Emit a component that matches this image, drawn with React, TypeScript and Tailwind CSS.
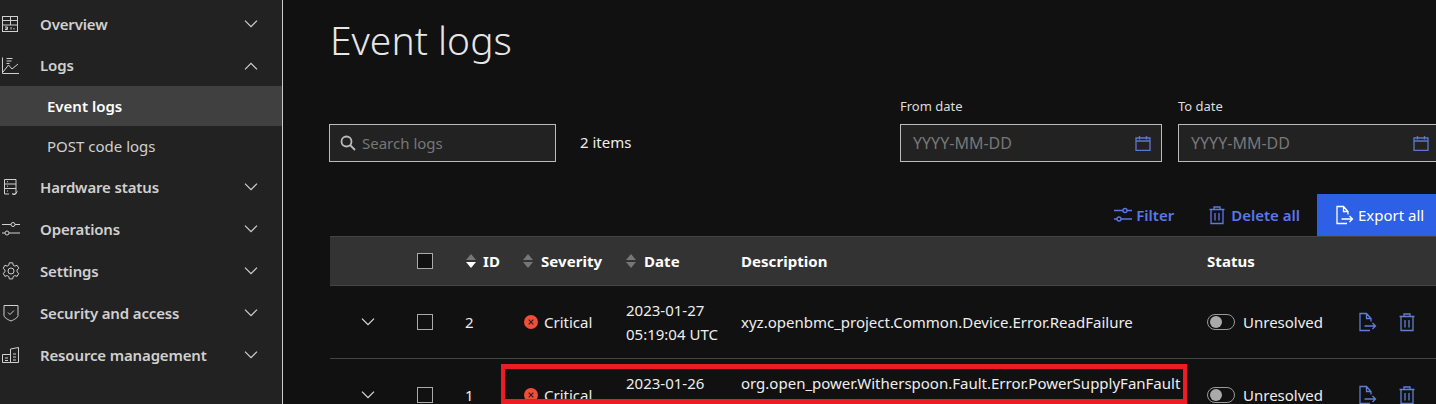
import type { ReactNode } from 'react';

const rowGrid = 'grid grid-cols-[87px_48px_57px_103px_116px_466px_150px_1fr] items-center';

function Svg({ children, className, strokeWidth = 1 }: { children: ReactNode; className?: string; strokeWidth?: number }) {
  return (
    <svg viewBox="0 0 20 20" fill="none" stroke="currentColor" strokeWidth={strokeWidth} className={className}>
      {children}
    </svg>
  );
}

const Chevron = ({ up, className }: { up?: boolean; className?: string }) => (
  <svg viewBox="0 0 14 8" fill="none" stroke="currentColor" strokeWidth="1.200" className={`w-[14px] h-[8px] ${className ?? ''}`}>
    <path d={up ? 'M1 7.300l6-6 6 6' : 'M1 .7l6 6 6-6'} />
  </svg>
);

const DashboardIcon = () => (
  <Svg className="w-[20px] h-[20px]">
    <rect x="1.500" y="2.500" width="15" height="15" />
    <path d="M1.500 6.500h15M1.500 11h15M9.500 2.500v8.500M4 13h2.500v1.200h-2M6.500 14.200v1.300h-2.500M10 13v2.500M13 14v1.500" />
  </Svg>
);
const ChartIcon = () => (
  <Svg className="w-[20px] h-[20px]">
    <path d="M1.500 1.500v16h16.500M2 16l5.500-7 3.500 4 6-5M5.500 2.500h6M5.500 5h5M5.500 7.500h3" />
  </Svg>
);
const HardwareIcon = () => (
  <Svg className="w-[20px] h-[20px]">
    <path d="M3.500 2.500h11.500v14.500h-4M8 17h-4.500v-14.500M3.500 7h11.500M3.500 11.500h11.500M6 4.700h1M6 9.200h1M6 14h1M11.500 16.500l1.500 1.500 3.500-3.500" />
  </Svg>
);
const SlidersIcon = ({ className, strokeWidth }: { className?: string; strokeWidth?: number }) => (
  <Svg className={className} strokeWidth={strokeWidth}>
    <circle cx="12" cy="5.500" r="2" />
    <circle cx="6" cy="14" r="2" />
    <path d="M1 5.500h9M14 5.500h5M1 14h3M8 14h11" />
  </Svg>
);
const GearIcon = () => (
  <Svg className="w-[20px] h-[20px]">
    <circle cx="10" cy="10" r="3" />
    <path d="M8.300 1.800h3.400l.5 2.400 1.600.9 2.300-.8 1.700 3-1.800 1.600v1.900l1.800 1.600-1.700 3-2.300-.8-1.600.9-.5 2.400H8.300l-.5-2.400-1.600-.9-2.300.8-1.700-3 1.800-1.600V9.100L2.200 7.300l1.700-3 2.300.8 1.600-.9z" />
  </Svg>
);
const ShieldIcon = () => (
  <Svg className="w-[20px] h-[20px]">
    <path d="M3 2.500h14v10c0 2-3.500 4-7 5.500-3.500-1.500-7-3.500-7-5.500zM7 9.500l2 2 4-4" />
  </Svg>
);
const ResourceIcon = () => (
  <Svg className="w-[20px] h-[20px]">
    <path d="M1.500 9.500h8v8h-8zM9.500 4l8-1.500v15h-8zM4 13h3M4 15.500h3M12 9h3M12 12h3M12 15h3" />
  </Svg>
);
const CalendarIcon = () => (
  <svg viewBox="0 0 16 16" fill="none" stroke="#5b78cc" strokeWidth="1.300" className="w-[16px] h-[16px]">
    <path d="M1 3h14v12.300h-14zM1 6h14M4.500 1v3.500M11.500 1v3.500" />
  </svg>
);
const TrashIcon = ({ className }: { className?: string }) => (
  <Svg className={className} strokeWidth={1.300}>
    <path d="M2.500 4.500h15M7 4.500v-2.500h6v2.500M4 4.500v14h12v-14M8 8v7.500M12 8v7.500" />
  </Svg>
);
const ExportIcon = ({ className }: { className?: string }) => (
  <Svg className={className} strokeWidth={1.300}>
    <path d="M13 18.500h-10v-17h6.500l4.500 5v3M9.500 1.500v5h4.500M7.500 14h11M15.500 11l3 3-3 3" />
  </Svg>
);

function NavItem({ icon, label, open, height = 'h-[42px]' }: { icon: ReactNode; label: string; open?: boolean; height?: string }) {
  return (
    <div className={`${height} flex items-center text-[#d0d0d0] font-semibold tracking-[-0.15px]`}>
      <span className="w-[40px] pl-px shrink-0 flex">{icon}</span>
      <span className="flex-1">{label}</span>
      <Chevron up={open} className="mr-[24px]" />
    </div>
  );
}

function DateField({ label }: { label: string }) {
  return (
    <div className="w-[262px] shrink-0">
      <div className="text-[13px] text-[#ddd] h-[28px] leading-[16px] pt-[2px]">{label}</div>
      <div className="h-[38px] bg-[#222] border border-[#bbb] flex items-center justify-between pl-[12px] pr-[10px] text-[#777]">
        <span className="text-[16px]">YYYY-MM-DD</span>
        <CalendarIcon />
      </div>
    </div>
  );
}

function SortIcon({ active }: { active?: boolean }) {
  return (
    <svg viewBox="0 0 12 16" className="w-[12px] h-[16px]">
      <path d="M6 1l5 6H1z" fill="#777" />
      <path d="M6 15l5-6H1z" fill={active ? '#fff' : '#777'} />
    </svg>
  );
}

function Checkbox() {
  return <div className="w-[16px] h-[16px] border border-[#aaa] bg-[#111]" />;
}

function LogRow({ id, date, time, desc, descTop }: { id: string; date: string; time: string; desc: string; descTop?: boolean }) {
  return (
    <div className={`${rowGrid} h-[73px] border-b border-[#444] text-[#eee]`}>
      <Chevron className="ml-[31px] text-[#ddd]" />
      <Checkbox />
      <span>{id}</span>
      <div className="flex items-center gap-[6px] pl-[2px]">
        <svg viewBox="0 0 14 14" className="w-[14px] h-[14px]">
          <circle cx="7" cy="7" r="7" fill="#f04e37" />
          <path d="M4.700 4.700l4.600 4.600M9.300 4.700l-4.600 4.600" stroke="#222" strokeWidth="1.200" />
        </svg>
        <span>Critical</span>
      </div>
      <div className="leading-[24px] self-start pt-[12px] pl-px whitespace-nowrap">
        {date}
        <br />
        {time}
      </div>
      <span className={descTop ? 'whitespace-nowrap self-start pt-[12px] leading-[24px]' : 'whitespace-nowrap'}>{desc}</span>
      <div className="flex items-center gap-[8px] whitespace-nowrap">
        <div className="w-[28px] h-[16px] rounded-full border border-[#999] flex items-center pl-[2px] shrink-0">
          <div className="w-[12px] h-[12px] rounded-full bg-[#aaa]" />
        </div>
        Unresolved
      </div>
      <div className="flex items-center gap-[20px] text-[#5f7ed6]">
        <ExportIcon className="w-[20px] h-[20px]" />
        <TrashIcon className="w-[20px] h-[20px]" />
      </div>
    </div>
  );
}

export default function App() {
  return (
    <div className="relative flex h-[404px] w-[1436px] overflow-hidden bg-[#111] text-[15px] font-['Noto_Sans',sans-serif]">
      <aside className="w-[283px] shrink-0 bg-[#222] border-r border-[#ccc] pt-[3px]">
        <NavItem icon={<DashboardIcon />} label="Overview" />
        <NavItem icon={<ChartIcon />} label="Logs" open height="h-[41px]" />
        <div className="h-[40px] flex items-center pl-[47px] bg-[#404040] text-white font-semibold">Event logs</div>
        <div className="h-[40px] flex items-center pl-[47px] text-[#d0d0d0]">POST code logs</div>
        <NavItem icon={<HardwareIcon />} label="Hardware status" />
        <NavItem icon={<SlidersIcon className="w-[20px] h-[20px]" />} label="Operations" />
        <NavItem icon={<GearIcon />} label="Settings" />
        <NavItem icon={<ShieldIcon />} label="Security and access" />
        <NavItem icon={<ResourceIcon />} label="Resource management" />
      </aside>

      <main className="flex-1 min-w-0 pl-[46px]">
        <h1 className="text-[39px] font-light text-[#e6e6e6] leading-[48px] pt-[16px] h-[76px] pl-px">Event logs</h1>
        <div className="flex items-start mt-[20px]">
          <div className="w-[227px] h-[38px] mt-[28px] bg-[#222] border border-[#bbb] flex items-center gap-[6px] pl-[10px] text-[#777]">
            <svg viewBox="0 0 16 16" fill="none" stroke="#bbb" strokeWidth="1.800" className="w-[16px] h-[16px]">
              <circle cx="6.500" cy="6.500" r="5" />
              <path d="M10 10l5 5" />
            </svg>
            Search logs
          </div>
          <span className="ml-[24px] mt-[35px] text-[#eee]">2 items</span>
          <div className="ml-auto flex gap-[16px] w-[536px] shrink-0">
            <DateField label="From date" />
            <DateField label="To date" />
          </div>
        </div>
        <div className="flex justify-end items-center h-[42px] mt-[32px] font-semibold text-[#5b78e6]">
          <div className="flex items-center gap-[3px]">
            <SlidersIcon className="w-[20px] h-[20px]" strokeWidth={1.300} />
            Filter
          </div>
          <div className="flex items-center gap-[4px] ml-[33px]">
            <TrashIcon className="w-[20px] h-[20px]" />
            Delete all
          </div>
          <div className="flex items-center gap-[4px] ml-[17px] w-[119px] h-[42px] pl-[17px] bg-[#2d60e5] text-white font-normal">
            <ExportIcon className="w-[20px] h-[20px]" />
            Export all
          </div>
        </div>
        <div className="w-[1106px] ml-px">
          <div className={`${rowGrid} h-[50px] bg-[#333] border-b border-[#444] border-t font-bold tracking-[0.05px] text-white`}>
            <span />
            <Checkbox />
            <div className="flex items-center gap-[6px]"><SortIcon active />ID</div>
            <div className="flex items-center gap-[7px]"><SortIcon />Severity</div>
            <div className="flex items-center gap-[7px]"><SortIcon />Date</div>
            <span>Description</span>
            <span>Status</span>
            <span />
          </div>
          <LogRow id="2" date="2023-01-27" time="05:19:04 UTC" desc="xyz.openbmc_project.Common.Device.Error.ReadFailure" />
          <LogRow id="1" date="2023-01-26" time="" desc="org.open_power.Witherspoon.Fault.Error.PowerSupplyFanFault" descTop />
        </div>
      </main>

      <div className="absolute left-[501px] top-[364px] w-[686px] h-[40px] border-x-[4px] border-y-[5px] border-[#ed1c24]" />
    </div>
  );
}
